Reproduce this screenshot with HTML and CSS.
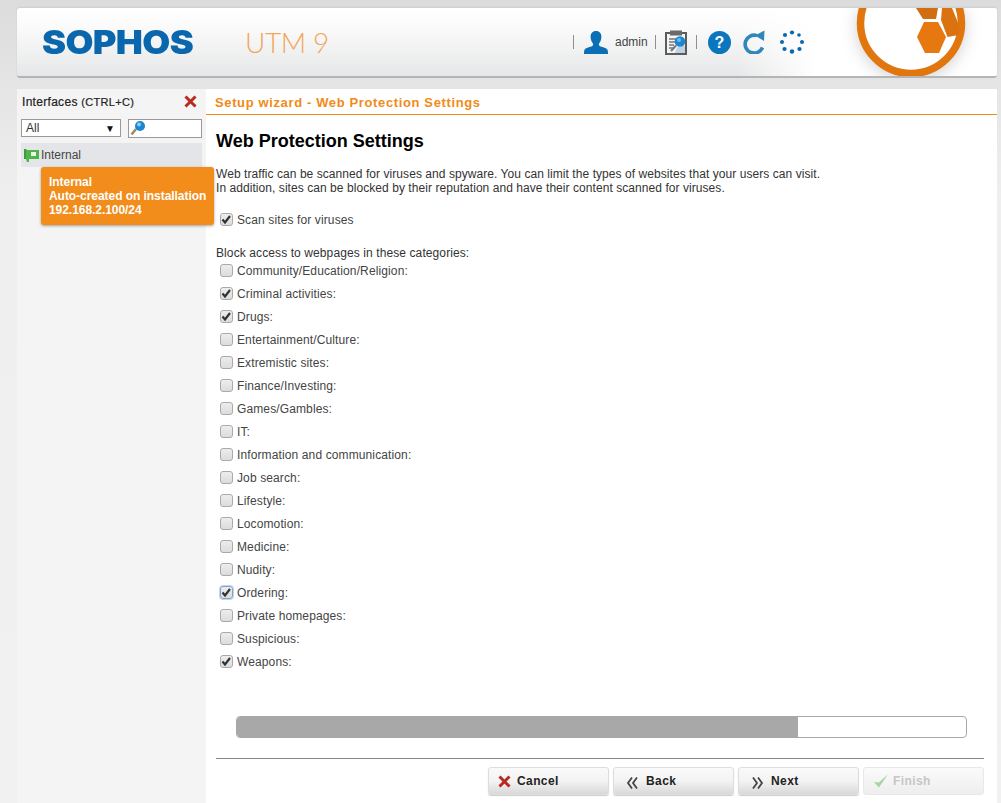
FILE: index.html
```html
<!DOCTYPE html>
<html lang="en">
<head>
<meta charset="utf-8">
<title>Sophos UTM 9</title>
<link rel="stylesheet" href="styles.css">
</head>
<body>
<header class="topbar">
  <div class="brand">SOPHOS</div>
  <div class="product">UTM 9</div>
  <div class="tools">
    <span class="sep"></span>
    <svg class="ico-user" width="24" height="23" viewBox="0 0 24 23"><path fill="#0a6fb5" d="M12 0c3.600 0 5.400 2.500 5.400 5.800 0 2.700-1 5-2.200 6.400-.6.800-.4 2.200.5 2.800 2 1.100 6.200 1.500 7.500 3.300.7 1.100.8 2.700.8 4.700H0c0-2 .1-3.600.8-4.700 1.300-1.800 5.500-2.200 7.500-3.300.9-.6 1.100-2 .5-2.800-1.200-1.400-2.200-3.700-2.200-6.400C6.600 2.500 8.400 0 12 0z"/></svg>
    <span class="user">admin</span>
    <span class="sep"></span>
    <svg class="ico-clip" width="22" height="25" viewBox="0 0 22 25"><rect x="1" y="3" width="20" height="21" fill="#f4f4f4" stroke="#5c5c5c" stroke-width="2"/><rect x="5" y="0.500" width="12" height="5" fill="#6a6a6a"/><path d="M4 9h8M4 12h6M4 15h5M4 18h4" stroke="#777" stroke-width="1.500"/><path d="M12 17.500l8-2v7.500h-10z" fill="#bcd3e4"/><circle cx="15" cy="11.500" r="5.300" fill="#1b87cf"/><circle cx="14" cy="10" r="2" fill="#6dbcec"/><path d="M11 15.500l-5 5.500" stroke="#777" stroke-width="2"/></svg>
    <span class="sep"></span>
    <svg class="ico-help" width="23" height="23" viewBox="0 0 23 23"><circle cx="11.500" cy="11.500" r="11.500" fill="#0a76bd"/><text x="11.500" y="17" text-anchor="middle" class="help-mark">?</text></svg>
    <svg class="ico-reload" width="23" height="24" viewBox="0 0 23 24"><path d="M15 5.600A9 9 0 1 0 20.500 17.500" fill="none" stroke="#2f86bb" stroke-width="3.600"/><path d="M13 5.500L22.500.5 22 11z" fill="#2f86bb"/></svg>
    <svg class="ico-spin" width="24" height="24" viewBox="0 0 24 24" fill="#0a69ad"><circle cx="12" cy="2.500" r="2.100"/><circle cx="19" cy="5" r="1.800"/><circle cx="22" cy="12" r="2"/><circle cx="19.500" cy="19" r="2.100"/><circle cx="12" cy="21.500" r="2.200"/><circle cx="4.500" cy="19" r="2.100"/><circle cx="2" cy="12" r="2"/><circle cx="5" cy="5" r="2.100"/></svg>
  </div>
  <svg class="emblem" width="122" height="70" viewBox="0 0 122 70"><circle cx="61" cy="15" r="50.500" fill="#fff" stroke="#e2760e" stroke-width="7.500"/><path d="M67 29l7-15h14l8 15-7 16H75z" fill="#e7780f"/><path d="M66 0h22l-2 11H73z" fill="#d06f12"/><path d="M92 0h10l6.500 16 1.500 2-1.500 9-11 2-6.500-17z" fill="#d9720f"/></svg>
</header>

<div class="workspace">
  <aside class="side">
    <div class="side-head">
      <span class="side-title">Interfaces <small>(CTRL+C)</small></span>
      <svg class="ico-x" width="13" height="13" viewBox="0 0 13 13"><path d="M1.500 1.500l10 10M11.500 1.500l-10 10" stroke="#b92a20" stroke-width="3"/></svg>
    </div>
    <div class="filters">
      <div class="select"><span>All</span><span class="arrow">▼</span></div>
      <div class="search"><svg width="16" height="16" viewBox="0 0 16 16"><path d="M6 9l-4.500 5.500" stroke="#9a8a60" stroke-width="2.500"/><circle cx="10" cy="6" r="5" fill="#1a86d0"/><circle cx="9" cy="4.500" r="2" fill="#8ccbf2"/></svg></div>
    </div>
    <div class="iface">
      <svg width="15" height="14" viewBox="0 0 15 14"><path d="M0 1h2.500v1H15v9H5v3H3L2 11H1z" fill="#4fb548"/><rect x="7" y="4" width="5" height="4" fill="#eef9ea"/><rect x="0" y="1" width="2" height="10" fill="#3a9d3c"/></svg>
      <span>Internal</span>
    </div>
    <div class="tooltip">Internal<br>Auto-created on installation<br>192.168.2.100/24</div>
  </aside>

  <main class="main">
    <div class="wizard-title">Setup wizard - Web Protection Settings</div>
    <div class="body">
      <h1>Web Protection Settings</h1>
      <p class="intro">Web traffic can be scanned for viruses and spyware. You can limit the types of websites that your users can visit.<br>In addition, sites can be blocked by their reputation and have their content scanned for viruses.</p>
      <label class="row scan"><input type="checkbox" checked>Scan sites for viruses</label>
      <div class="cat-head">Block access to webpages in these categories:</div>
      <div class="cats">
        <label class="row"><input type="checkbox">Community/Education/Religion:</label>
        <label class="row"><input type="checkbox" checked>Criminal activities:</label>
        <label class="row"><input type="checkbox" checked>Drugs:</label>
        <label class="row"><input type="checkbox">Entertainment/Culture:</label>
        <label class="row"><input type="checkbox">Extremistic sites:</label>
        <label class="row"><input type="checkbox">Finance/Investing:</label>
        <label class="row"><input type="checkbox">Games/Gambles:</label>
        <label class="row"><input type="checkbox">IT:</label>
        <label class="row"><input type="checkbox">Information and communication:</label>
        <label class="row"><input type="checkbox">Job search:</label>
        <label class="row"><input type="checkbox">Lifestyle:</label>
        <label class="row"><input type="checkbox">Locomotion:</label>
        <label class="row"><input type="checkbox">Medicine:</label>
        <label class="row"><input type="checkbox">Nudity:</label>
        <label class="row"><input class="focused" type="checkbox" checked>Ordering:</label>
        <label class="row"><input type="checkbox">Private homepages:</label>
        <label class="row"><input type="checkbox">Suspicious:</label>
        <label class="row"><input type="checkbox" checked>Weapons:</label>
      </div>
      <div class="progress"><div class="progress-fill" style="width:76.900%"></div></div>
      <div class="actions">
        <button class="btn" type="button"><svg width="13" height="13" viewBox="0 0 13 13"><path d="M1.500 1.500l10 10M11.500 1.500l-10 10" stroke="#b92a20" stroke-width="3"/></svg>Cancel</button>
        <button class="btn" type="button"><svg class="chev" width="13" height="13" viewBox="0 0 13 13"><path d="M6 1.500L2 7l4 5.500M11 1.500L7 7l4 5.500" fill="none" stroke="#444" stroke-width="1.800"/></svg>Back</button>
        <button class="btn" type="button"><svg class="chev" width="13" height="13" viewBox="0 0 13 13"><path d="M2 1.500L6 7l-4 5.500M7 1.500L11 7l-4 5.500" fill="none" stroke="#444" stroke-width="1.800"/></svg>Next</button>
        <button class="btn off" type="button"><svg width="16" height="16" viewBox="0 0 15 15"><path d="M1 8.500l4.500 5L14 1.500 5.500 9z" fill="#a5d6a0"/></svg>Finish</button>
      </div>
    </div>
  </main>
</div>
</body>
</html>
```
FILE: styles.css
```css
* { box-sizing: border-box; }
html, body { height: 100%; }
body {
  margin: 0;
  padding: 8px 4px 0 17px;
  height: 803px;
  overflow: hidden;
  background: linear-gradient(#dcdcdc 0, #e4e4e4 80px, #efefef 200px, #f1f1f1 100%);
  font: 12px "Liberation Sans", Arial, sans-serif;
  color: #333;
}
.topbar {
  position: relative;
  height: 70px;
  display: flex;
  align-items: center;
  overflow: hidden;
  border-radius: 3px;
  background: linear-gradient(#ffffff 0, #fafafa 30%, #e6e7e8 100%);
  border-bottom: 2px solid #b5b5b5;
  box-shadow: 0 -1px 2px #ccc;
}
.topbar::after {
  content: "";
  position: absolute;
  right: 0; top: 0; bottom: 0;
  width: 260px;
  background: linear-gradient(90deg, rgba(255,255,255,0), #fff 30%);
}
.brand {
  margin-left: 25px;
  width: 152px;
  white-space: nowrap;
  font: 900 33px/1 Inter, Lato, "Liberation Sans", sans-serif;
  letter-spacing: -.6px;
  color: #0a66ad;
  transform: scaleX(1.095);
  transform-origin: left center;
}
.product {
  margin-left: 51px;
  font: 300 28px/1 Lato, "Liberation Sans", sans-serif;
  letter-spacing: -.4px;
  color: #f2a65a;
}
.tools {
  position: absolute;
  z-index: 1;
  left: 556px;
  top: 21px;
  display: flex;
  align-items: center;
  height: 26px;
}
.sep { width: 1px; height: 14px; background: #8e8e8e; }
.ico-user { margin-left: 10px; }
.user { margin-left: 7px; color: #444; }
.user + .sep { margin-left: 7px; }
.ico-clip { margin-left: 9px; }
.ico-clip + .sep { margin-left: 9px; }
.ico-help { margin-left: 11px; }
.ico-reload { margin-left: 11px; }
.ico-spin { margin-left: 15px; }
.help-mark { font: 700 16px "Liberation Sans", sans-serif; fill: #fff; }
.emblem {
  position: absolute;
  z-index: 1;
  right: 25px;
  top: 0;
  filter: drop-shadow(0 3px 8px rgba(0,0,0,.18));
}
.workspace {
  margin-top: 11px;
  display: flex;
  height: 714px;
}
.side {
  position: relative;
  width: 189px;
  flex: none;
  background: #f4f4f4;
  padding: 0 4px;
}
.side-head {
  height: 25px;
  padding: 0 5px 0 1px;
  display: flex;
  align-items: center;
  justify-content: space-between;
}
.side-title { font-size: 12px; letter-spacing: .3px; color: #222; -webkit-text-stroke: .2px #222; }
.side-title small { font-size: 11px; }
.filters { display: flex; gap: 7px; margin-top: 5px; }
.select {
  width: 100px;
  height: 18px;
  padding: 0 3px 0 4px;
  display: flex;
  justify-content: space-between;
  align-items: center;
  background: #fff;
  border: 1px solid #999;
  color: #333;
}
.arrow { font-size: 10px; color: #111; margin-right: 2px; }
.search {
  width: 74px;
  height: 19px;
  background: #fff;
  border: 1px solid #999;
  padding-left: 1px;
  line-height: 0;
}
.iface {
  margin-top: 5px;
  height: 24px;
  width: 181px;
  background: #e4e5e9;
  display: flex;
  align-items: center;
  gap: 2px;
  padding-left: 3px;
  color: #444;
}
.tooltip {
  position: absolute;
  left: 24px;
  top: 78px;
  width: 173px;
  height: 58px;
  z-index: 2;
  padding: 8px;
  line-height: 14px;
  font-weight: 700;
  letter-spacing: -.05px;
  white-space: nowrap;
  color: #fff;
  background: #f28c1a;
  border-radius: 3px;
  box-shadow: 0 1px 3px rgba(0,0,0,.35);
}
.main {
  flex: 1;
  background: #fff;
  min-width: 0;
}
.wizard-title {
  height: 26px;
  padding: 6px 0 0 9px;
  font-size: 13px;
  line-height: 15px;
  font-weight: 700;
  letter-spacing: .63px;
  color: #f28a17;
  border-bottom: 1px solid #f28a17;
}
.body { padding: 0 13px 0 10px; }
h1 {
  margin: 16px 0 0;
  font-size: 18px;
  line-height: 21px;
  font-weight: 700;
  color: #000;
}
.intro { margin: 15px 0 0; line-height: 14px; letter-spacing: .06px; color: #333; }
.row {
  display: flex;
  align-items: center;
  height: 23px;
  padding-left: 4px;
  letter-spacing: .12px;
  color: #444;
}
.scan { margin-top: 13px; }
.cat-head { margin-top: 15px; line-height: 14px; letter-spacing: .1px; color: #333; }
.cats { margin-top: -1px; }
input[type="checkbox"] {
  appearance: none;
  -webkit-appearance: none;
  flex: none;
  width: 13px;
  height: 13px;
  margin: 0 4px 0 0;
  border: 1px solid #aaa;
  border-radius: 3px;
  background: linear-gradient(#ededed, #dcdcdc);
}
input[type="checkbox"]:checked {
  background: url("data:image/svg+xml,%3Csvg xmlns='http://www.w3.org/2000/svg' width='11' height='11' viewBox='0 0 11 11'%3E%3Cpath d='M1.500 5.500l2.500 3 5-6.500' fill='none' stroke='%23333' stroke-width='2.200'/%3E%3C/svg%3E") center no-repeat, linear-gradient(#ededed, #dcdcdc);
}
input.focused { border-color: #7da2ce; box-shadow: 0 0 0 1px #c3d6ee; }
.progress {
  margin: 43px 17px 0 20px;
  height: 22px;
  border: 1px solid #a8a8a8;
  border-radius: 4px;
  overflow: hidden;
  background: #fff;
}
.progress-fill { height: 100%; background: #a8a8a8; }
.actions {
  margin-top: 20px;
  border-top: 1px solid #858585;
  padding-top: 8px;
  display: flex;
  justify-content: flex-end;
  gap: 4px;
}
.btn {
  width: 121px;
  height: 28px;
  display: flex;
  align-items: center;
  gap: 6px;
  padding: 0 0 0 9px;
  border: 1px solid #ddd;
  border-radius: 3px;
  background: linear-gradient(#fafafa 0, #f3f3f3 50%, #d9d9d9 100%);
  box-shadow: 0 1px 1px #ccc;
  font: 700 12px "Liberation Sans", sans-serif;
  letter-spacing: .4px;
  color: #222;
}
.chev { margin: 2px 1px 0 3px; }
.off { gap: 4px; color: #c6c6c6; background: linear-gradient(#fbfbfb, #eeeeee); box-shadow: none; border-color: #e8e8e8; }
```
